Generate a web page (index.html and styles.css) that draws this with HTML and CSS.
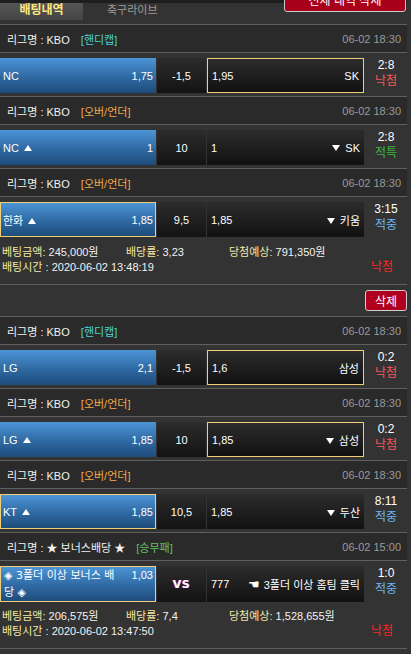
FILE: index.html
```html
<!DOCTYPE html>
<html lang="ko">
<head>
<meta charset="utf-8">
<title>배팅내역</title>
<link rel="stylesheet" href="styles.css">
</head>
<body>
<div class="page">
  <div class="topbar">
    <div class="tab active">배팅내역</div>
    <div class="tab plain">축구라이브</div>
    <div class="del-all">전체 내역 삭제</div>
  </div>

  <div class="group">
    <div class="match">
      <div class="league"><span>리그명 : KBO <span class="tag cyan">[핸디캡]</span></span><span class="date">06-02 18:30</span></div>
      <div class="row">
        <div class="home"><span>NC</span><span>1,75</span></div>
        <div class="mid">-1,5</div>
        <div class="away sel"><span>1,95</span><span>SK</span></div>
        <div class="score">2:8<span class="st lose">낙첨</span></div>
      </div>
    </div>
    <div class="match">
      <div class="league"><span>리그명 : KBO <span class="tag orange">[오버/언더]</span></span><span class="date">06-02 18:30</span></div>
      <div class="row">
        <div class="home"><span>NC <svg class="arr" viewBox="0 0 8 6"><path d="M4 0L8 6H0Z"/></svg></span><span>1</span></div>
        <div class="mid">10</div>
        <div class="away"><span>1</span><span><svg class="arr" viewBox="0 0 8 6"><path d="M0 0H8L4 6Z"/></svg> SK</span></div>
        <div class="score">2:8<span class="st push">적특</span></div>
      </div>
    </div>
    <div class="match">
      <div class="league"><span>리그명 : KBO <span class="tag orange">[오버/언더]</span></span><span class="date">06-02 18:30</span></div>
      <div class="row">
        <div class="home sel"><span>한화 <svg class="arr" viewBox="0 0 8 6"><path d="M4 0L8 6H0Z"/></svg></span><span>1,85</span></div>
        <div class="mid">9,5</div>
        <div class="away"><span>1,85</span><span><svg class="arr" viewBox="0 0 8 6"><path d="M0 0H8L4 6Z"/></svg> 키움</span></div>
        <div class="score">3:15<span class="st win">적중</span></div>
      </div>
    </div>
    <div class="summary">
      <div class="sum-line">
        <span class="sum-a"><span class="lbl">베팅금액:</span> 245,000원</span>
        <span class="sum-b"><span class="lbl">배당률:</span> 3,23</span>
        <span><span class="lbl">당첨예상:</span> 791,350원</span>
      </div>
      <div class="sum-line">
        <span><span class="lbl">배팅시간</span> : 2020-06-02 13:48:19</span>
        <span class="result">낙첨</span>
      </div>
    </div>
  </div>

  <div class="actions"><button class="btn-del" type="button">삭제</button></div>

  <div class="group last">
    <div class="match">
      <div class="league"><span>리그명 : KBO <span class="tag cyan">[핸디캡]</span></span><span class="date">06-02 18:30</span></div>
      <div class="row">
        <div class="home"><span>LG</span><span>2,1</span></div>
        <div class="mid">-1,5</div>
        <div class="away sel"><span>1,6</span><span>삼성</span></div>
        <div class="score">0:2<span class="st lose">낙첨</span></div>
      </div>
    </div>
    <div class="match">
      <div class="league"><span>리그명 : KBO <span class="tag orange">[오버/언더]</span></span><span class="date">06-02 18:30</span></div>
      <div class="row">
        <div class="home"><span>LG <svg class="arr" viewBox="0 0 8 6"><path d="M4 0L8 6H0Z"/></svg></span><span>1,85</span></div>
        <div class="mid">10</div>
        <div class="away sel"><span>1,85</span><span><svg class="arr" viewBox="0 0 8 6"><path d="M0 0H8L4 6Z"/></svg> 삼성</span></div>
        <div class="score">0:2<span class="st lose">낙첨</span></div>
      </div>
    </div>
    <div class="match">
      <div class="league"><span>리그명 : KBO <span class="tag orange">[오버/언더]</span></span><span class="date">06-02 18:30</span></div>
      <div class="row">
        <div class="home sel"><span>KT <svg class="arr" viewBox="0 0 8 6"><path d="M4 0L8 6H0Z"/></svg></span><span>1,85</span></div>
        <div class="mid">10,5</div>
        <div class="away"><span>1,85</span><span><svg class="arr" viewBox="0 0 8 6"><path d="M0 0H8L4 6Z"/></svg> 두산</span></div>
        <div class="score">8:11<span class="st win">적중</span></div>
      </div>
    </div>
    <div class="match">
      <div class="league"><span>리그명 : ★ 보너스배당 ★ <span class="tag green">[승무패]</span></span><span class="date">06-02 15:00</span></div>
      <div class="row">
        <div class="home sel two"><span class="bonus">◈ 3폴더 이상 보너스 배당 ◈</span><span>1,03</span></div>
        <div class="mid vs">VS</div>
        <div class="away"><span>777</span><span><span class="hand">☚</span> 3폴더 이상 홈팀 클릭</span></div>
        <div class="score">1:0<span class="st win">적중</span></div>
      </div>
    </div>
    <div class="summary">
      <div class="sum-line">
        <span class="sum-a"><span class="lbl">베팅금액:</span> 206,575원</span>
        <span class="sum-b"><span class="lbl">배당률:</span> 7,4</span>
        <span><span class="lbl">당첨예상:</span> 1,528,655원</span>
      </div>
      <div class="sum-line">
        <span><span class="lbl">배팅시간</span> : 2020-06-02 13:47:50</span>
        <span class="result">낙첨</span>
      </div>
    </div>
  </div>
</div>
</body>
</html>
```

FILE: styles.css
```css
* {
  box-sizing: border-box;
  margin: 0;
  padding: 0;
}

html, body {
  background: #333333;
}

body {
  width: 411px;
  height: 654px;
  overflow: hidden;
  font-family: "Liberation Sans", "Noto Sans CJK KR", sans-serif;
  font-size: 11px;
  color: #f0f0f0;
}

.page {
  width: 407px;
}

/* top tabs */
.topbar {
  height: 24px;
  display: flex;
  align-items: flex-start;
  overflow: hidden;
  background: linear-gradient(#1e1e1e 0 3px, #333333 3px);
}

.tab {
  margin-top: 3px;
  height: 17px;
  padding-top: 1px;
  line-height: 12px;
  font-size: 12px;
}

.tab.active {
  width: 83px;
  text-align: center;
  background: linear-gradient(#555555, #454545);
  color: #ffe77f;
  font-weight: bold;
}

.tab.plain {
  margin-left: 24px;
  color: #9c9c9c;
  font-size: 11px;
}

.del-all {
  margin-left: auto;
  margin-top: -10px;
  margin-right: 1px;
  width: 122px;
  height: 22px;
  background: #a8001a;
  border: 1px solid #c9c9c9;
  border-radius: 3px;
  color: #ffffff;
  font-size: 12px;
  text-align: center;
  line-height: 20px;
}

/* match block */
.league {
  height: 29px;
  border-top: 1px solid #5f5f5f;
  border-bottom: 1px solid #5f5f5f;
  background: #2a2a2a;
  display: flex;
  align-items: center;
  justify-content: space-between;
  padding: 0 6px 0 7px;
  font-size: 11px;
  color: #f2f2f2;
}

.tag {
  margin-left: 8px;
}

.cyan { color: #4fd2d2; }
.orange { color: #f7a745; }
.green { color: #66c060; }

.date {
  color: #9a9a9a;
}

.row {
  display: grid;
  grid-template-columns: 156px 49px 157px 1fr;
  column-gap: 1px;
  height: 35px;
  margin: 5px 0 3px;
}

.home {
  background: linear-gradient(#4c94d7, #2f69a2 55%, #1e4c7b);
  display: flex;
  align-items: center;
  justify-content: space-between;
  padding: 0 3px;
  color: #ffffff;
}

.home.two {
  align-items: flex-start;
  line-height: 17px;
}

.bonus {
  width: 116px;
  font-family: "DejaVu Sans", "Noto Sans CJK KR", sans-serif;
  font-size: 11px;
}

.mid {
  background: linear-gradient(#2c2c2c, #131313);
  display: flex;
  align-items: center;
  justify-content: center;
  color: #ffffff;
}

.vs {
  font-family: "DejaVu Sans", sans-serif;
  font-weight: bold;
  font-size: 11px;
  letter-spacing: 0.5px;
  color: #ffffff;
  text-shadow: -1px 0 #c72030, 1px 0 #2a3fc0;
}

.away {
  background: linear-gradient(#2c2c2c, #111111);
  display: flex;
  align-items: center;
  justify-content: space-between;
  padding: 0 4px 0 4px;
  color: #ffffff;
}

.sel {
  border: 1px solid #f0cf78;
}

.home.sel {
  padding: 0 2px;
}

.home.two.sel {
  padding: 0 2px 0 3px;
}

.arr {
  width: 8px;
  height: 6px;
  fill: #ffffff;
  margin: 0 2px;
  vertical-align: 1px;
}

.hand {
  font-family: "DejaVu Sans", sans-serif;
  font-size: 13px;
  margin-right: 1px;
}

.score {
  margin-top: -1px;
  display: flex;
  flex-direction: column;
  align-items: center;
  line-height: 16px;
  font-size: 12px;
  color: #ffffff;
}

.st {
  font-size: 12px;
}

.lose { color: #ff5454; }
.push { color: #3fb43f; }
.win { color: #6cb6f2; }

/* summary */
.summary {
  padding: 5px 0 9px 2px;
  line-height: 15px;
  font-size: 11px;
  color: #f2f2f2;
}

.sum-line {
  display: flex;
  justify-content: space-between;
}

.sum-line:first-child {
  justify-content: flex-start;
}

.sum-a {
  width: 124px;
}

.sum-b {
  width: 103px;
}

.lbl {
  color: #f5e8a4;
}

.result {
  color: #ff2323;
  margin-right: 14px;
  font-size: 12px;
}

.group.last {
  border-bottom: 1px solid #5f5f5f;
}

/* action band */
.actions {
  height: 32px;
  border-top: 1px solid #5f5f5f;
  display: flex;
  align-items: center;
  justify-content: flex-end;
}

.btn-del {
  width: 42px;
  height: 21px;
  background: #b0001f;
  border: 1px solid #cfcfcf;
  border-radius: 3px;
  color: #ffffff;
  font-family: "Noto Sans CJK KR", sans-serif;
  font-size: 12px;
  line-height: 19px;
}
```
